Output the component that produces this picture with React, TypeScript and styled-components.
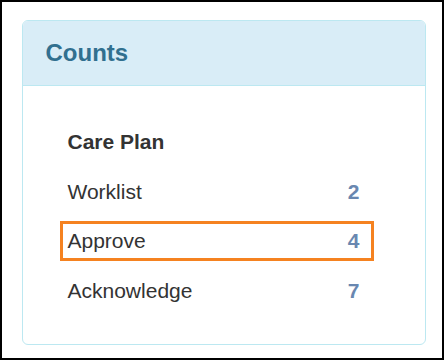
import styled, { createGlobalStyle } from "styled-components";

const GlobalStyle = createGlobalStyle`
  html, body {
    margin: 0;
    padding: 0;
    background: #fff;
  }

  body {
    font-family: "Liberation Sans", Arial, sans-serif;
    color: #333;
  }
`;

interface CountItem {
  label: string;
  count: number;
  selected?: boolean;
}

const items: CountItem[] = [
  { label: "Worklist", count: 2 },
  { label: "Approve", count: 4, selected: true },
  { label: "Acknowledge", count: 7 },
];

const Frame = styled.div`
  box-sizing: border-box;
  width: 444px;
  height: 360px;
  border: 2px solid #000;
  padding: 18px 0 0 20px;
`;

const Panel = styled.section`
  box-sizing: border-box;
  width: 404px;
  height: 325px;
  border: 1.5px solid #bce8f1;
  border-radius: 6px;
  overflow: hidden;
  background: #fff;
`;

const Heading = styled.header`
  box-sizing: border-box;
  display: flex;
  align-items: center;
  height: 64.5px;
  padding: 0 22.5px;
  background: #d9edf7;
  border-bottom: 1.5px solid #bce8f1;
`;

const Title = styled.h3`
  margin: 0;
  font-size: 24px;
  font-weight: bold;
  color: #31708f;
  line-height: 1.1;
`;

const Body = styled.div`
  padding: 36px 0 0 36.5px;
`;

const List = styled.ul`
  list-style: none;
  margin: 0;
  padding: 0;
  width: 314px;
`;

const Row = styled.li<{ $selected?: boolean }>`
  box-sizing: border-box;
  display: flex;
  align-items: center;
  justify-content: space-between;
  height: 40px;
  margin-bottom: 9.5px;
  padding: 0 11px 0 5px;
  border: 3px solid ${({ $selected }) => ($selected ? "#f58220" : "transparent")};
  font-size: 21px;
  line-height: 1;
  color: #333;
`;

const GroupLabel = styled.span`
  font-weight: bold;
`;

const Count = styled.span`
  font-weight: bold;
  color: #6987b0;
`;

const App = () => (
  <>
    <GlobalStyle />
    <Frame>
      <Panel>
        <Heading>
          <Title>Counts</Title>
        </Heading>
        <Body>
          <List>
            <Row>
              <GroupLabel>Care Plan</GroupLabel>
            </Row>
            {items.map((item) => (
              <Row key={item.label} $selected={item.selected}>
                <span>{item.label}</span>
                <Count>{item.count}</Count>
              </Row>
            ))}
          </List>
        </Body>
      </Panel>
    </Frame>
  </>
);

export default App;
